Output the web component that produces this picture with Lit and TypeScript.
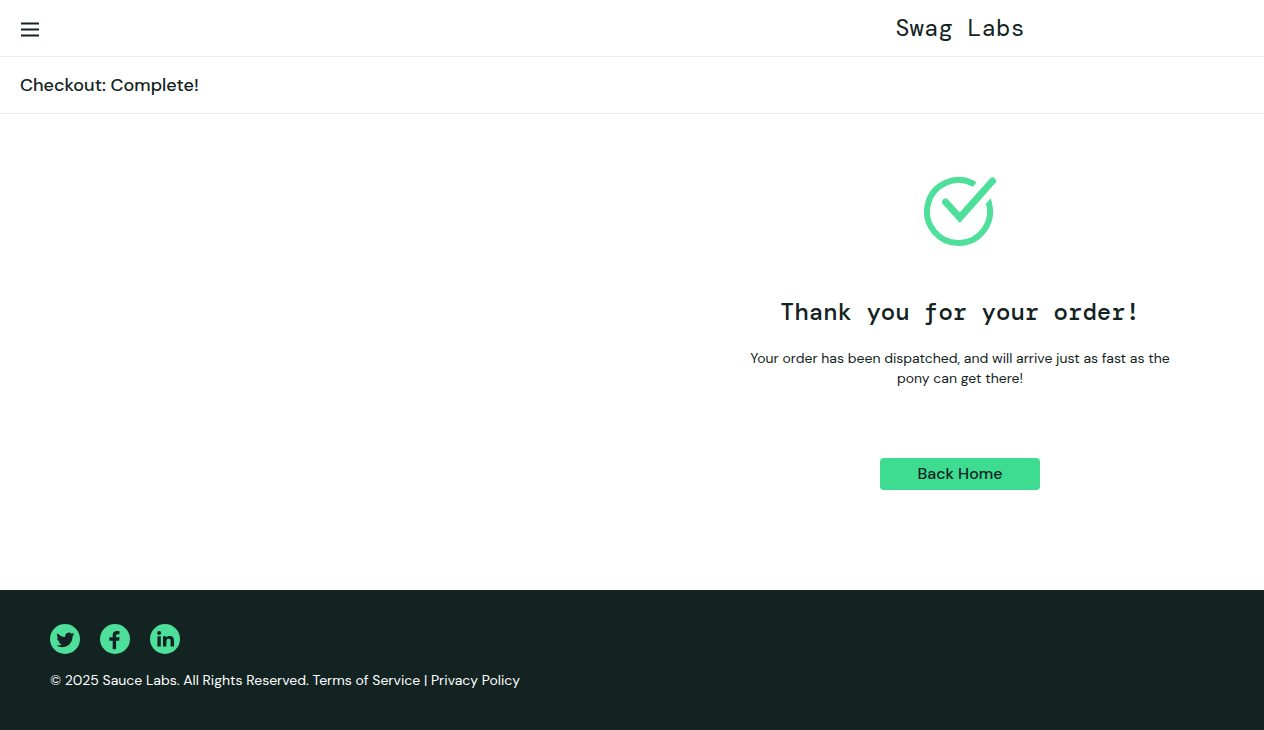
import { LitElement, html, css } from "lit";
import { customElement } from "lit/decorators.js";

@customElement("app-root")
export class AppRoot extends LitElement {
  static styles = css`
    :host {
      display: flex;
      flex-direction: column;
      min-height: 100vh;
      background: #fff;
      color: #132322;
      font-family: "DM Sans", Lato, "Open Sans", sans-serif;
      font-size: 14px;
      line-height: 20px;
    }
    * {
      box-sizing: border-box;
    }
    .bar {
      display: grid;
      grid-template-columns: 656px 1fr;
      align-items: center;
      height: 57px;
      border-bottom: 1px solid #ededed;
    }
    .menu {
      width: 20px;
      height: 20px;
      margin: 2px 0 0 20px;
      padding: 0;
      border: 0;
      background: none;
      color: inherit;
    }
    svg {
      display: block;
    }
    .logo {
      font-family: "DM Mono", "Liberation Mono", monospace;
      font-size: 24px;
      line-height: 32px;
      text-align: center;
    }
    .subheader {
      display: flex;
      align-items: center;
      height: 57px;
      padding: 0 20px;
      border-bottom: 1px solid #ededed;
    }
    .title {
      margin: 0;
      font-size: 18px;
      line-height: 24px;
      font-weight: 500;
    }
    main {
      flex: 1;
      display: grid;
      grid-template-columns: 656px 1fr;
    }
    .complete {
      grid-column: 2;
      display: flex;
      flex-direction: column;
      align-items: center;
      padding: 60px 20px;
      text-align: center;
    }
    h2 {
      margin: 46px 0 0;
      font-family: "DM Mono", "Liberation Mono", monospace;
      font-size: 24px;
      line-height: 32px;
      font-weight: 500;
    }
    p {
      max-width: 450px;
      margin: 20px 0 70px;
    }
    .home {
      width: 160px;
      height: 32px;
      border: 0;
      border-radius: 4px;
      background: #3ddc91;
      color: inherit;
      font: inherit;
      font-size: 16px;
      font-weight: 500;
    }
    footer {
      height: 140px;
      padding: 34px 50px 0;
      background: #132322;
      color: #fff;
    }
    ul {
      display: flex;
      gap: 20px;
      margin: 0 0 16px;
      padding: 0;
      list-style: none;
    }
    .social {
      display: block;
      color: #4ee09b;
    }
  `;

  render() {
    return html`
      <header class="bar">
        <button class="menu" aria-label="Open Menu">
          <svg width="20" height="20" viewBox="0 0 20 20" fill="currentColor">
            <path d="M1 3.4h18v2H1zM1 9.4h18v2H1zM1 15.4h18v2H1z" />
          </svg>
        </button>
        <div class="logo">Swag Labs</div>
      </header>
      <div class="subheader"><h1 class="title">Checkout: Complete!</h1></div>
      <main>
        <section class="complete">
          <svg width="76" height="76" viewBox="0 0 76 76" fill="none" stroke="#4ee09b" aria-hidden="true">
            <path d="M51.5 9.8A31.5 31.5 0 1 0 66.7 28.5" stroke-width="6" />
            <path d="M50 5.8L54.6 8.2L51 12.8L48 11.6zM68.8 24.2L70.2 29.5L65 31.5L64 29.4z" fill="#4ee09b" stroke="none" />
            <path d="M23.5 28L37.8 43.7L70.5 7" stroke-width="7" stroke-linecap="round" />
          </svg>
          <h2>Thank you for your order!</h2>
          <p>Your order has been dispatched, and will arrive just as fast as the pony can get there!</p>
          <button class="home">Back Home</button>
        </section>
      </main>
      <footer>
        <ul>
          <li>
            <a class="social" href="#twitter" aria-label="Twitter">
              <svg width="30" height="30" viewBox="0 0 30 30">
                <circle cx="15" cy="15" r="15" fill="currentColor" />
                <g transform="translate(6.4 6.9) scale(.75)">
                  <path fill="#132322" d="M23.95 4.57a10 10 0 0 1-2.82.77 4.96 4.96 0 0 0 2.16-2.72c-.95.56-2 .96-3.13 1.19a4.92 4.92 0 0 0-8.38 4.48C7.69 8.09 4.07 6.13 1.64 3.16a4.92 4.92 0 0 0 1.52 6.57 4.9 4.9 0 0 1-2.23-.61v.06a4.92 4.92 0 0 0 3.95 4.83 5 5 0 0 1-2.21.08 4.94 4.94 0 0 0 4.6 3.42A9.87 9.87 0 0 1 0 19.54a13.99 13.99 0 0 0 7.55 2.21c9.05 0 14-7.5 14-13.98 0-.21 0-.42-.02-.63a9.94 9.94 0 0 0 2.42-2.57z" />
                </g>
              </svg>
            </a>
          </li>
          <li>
            <a class="social" href="#facebook" aria-label="Facebook">
              <svg width="30" height="30" viewBox="0 0 30 30">
                <circle cx="15" cy="15" r="15" fill="currentColor" />
                <path fill="#132322" d="M12.7 25.3v-8.6H9.3v-3.4h3.4v-2.2c0-2.6 1.6-4 4.1-4 1.2 0 2.1.1 2.7.2v3h-1.8c-1.2 0-1.6.7-1.6 1.6v1.4h3.5l-.5 3.4h-3v8.6z" />
              </svg>
            </a>
          </li>
          <li>
            <a class="social" href="#linkedin" aria-label="LinkedIn">
              <svg width="30" height="30" viewBox="0 0 30 30">
                <circle cx="15" cy="15" r="15" fill="currentColor" />
                <circle cx="9.1" cy="8.9" r="2" fill="#132322" />
                <path fill="#132322" d="M7.4 12.3h3.4v10.3H7.4zM13 12.3h3.2v1.4c.6-1 1.7-1.7 3.3-1.7 3.3 0 4.5 1.8 4.5 5v5.6h-3.4v-5.1c0-1.5-.2-2.8-1.9-2.8s-2.3 1.2-2.3 2.7v5.2H13z" />
              </svg>
            </a>
          </li>
        </ul>
        <div>© 2025 Sauce Labs. All Rights Reserved. Terms of Service | Privacy Policy</div>
      </footer>
    `;
  }
}
